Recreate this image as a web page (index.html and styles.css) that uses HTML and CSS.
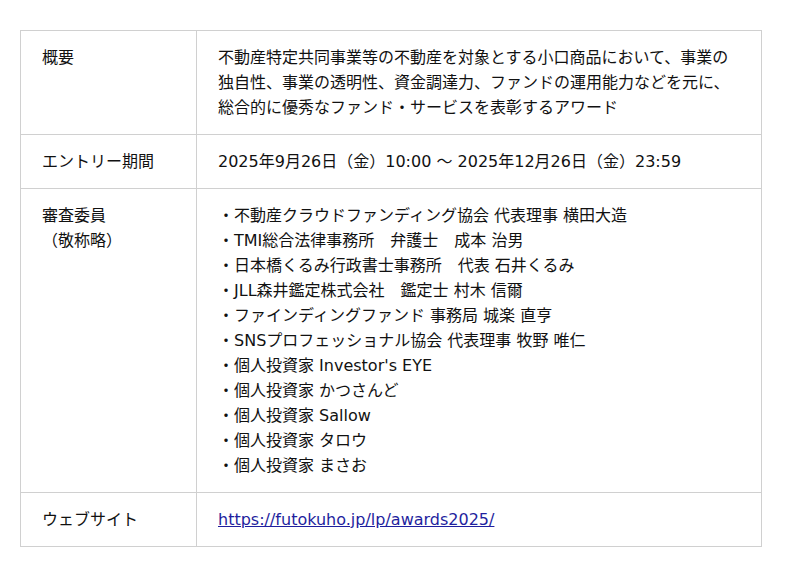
FILE: index.html
```html
<!DOCTYPE html>
<html lang="ja">
<head>
<meta charset="utf-8">
<link rel="stylesheet" href="styles.css">
</head>
<body>
<div class="page">
<table class="info">
  <tr>
    <th>概要</th>
    <td>不動産特定共同事業等の不動産を対象とする小口商品において、事業の独自性、事業の透明性、資金調達力、ファンドの運用能力などを元に、総合的に優秀なファンド・サービスを表彰するアワード</td>
  </tr>
  <tr>
    <th>エントリー期間</th>
    <td>2025年9月26日（金）10:00 ～ 2025年12月26日（金）23:59</td>
  </tr>
  <tr>
    <th>審査委員<br>（敬称略）</th>
    <td>
      ・不動産クラウドファンディング協会 代表理事 横田大造<br>
      ・TMI総合法律事務所　弁護士　成本 治男<br>
      ・日本橋くるみ行政書士事務所　代表 石井くるみ<br>
      ・JLL森井鑑定株式会社　鑑定士 村木 信爾<br>
      ・ファインディングファンド 事務局 城楽 直亨<br>
      ・SNSプロフェッショナル協会 代表理事 牧野 唯仁<br>
      ・個人投資家 Investor's EYE<br>
      ・個人投資家 かつさんど<br>
      ・個人投資家 Sallow<br>
      ・個人投資家 タロウ<br>
      ・個人投資家 まさお
    </td>
  </tr>
  <tr>
    <th>ウェブサイト</th>
    <td><a class="link" href="#">https://futokuho.jp/lp/awards2025/</a></td>
  </tr>
</table>
</div>
</body>
</html>
```
FILE: styles.css
```css
html, body {
  margin: 0;
  padding: 0;
  background: #fff;
}
.page {
  padding: 30px 20px;
}
.info {
  width: 742px;
  border-collapse: collapse;
  font-family: "DejaVu Sans", "Noto Sans CJK JP", sans-serif;
  font-size: 16px;
  line-height: 25px;
  color: #111;
}
.info th,
.info td {
  border: 1px solid #d0d0d0;
  padding: 14px 21px;
  vertical-align: top;
  text-align: left;
  font-weight: normal;
}
.info th {
  width: 133px;
}
.link {
  color: #1f1f9e;
  text-decoration: underline;
}
```
